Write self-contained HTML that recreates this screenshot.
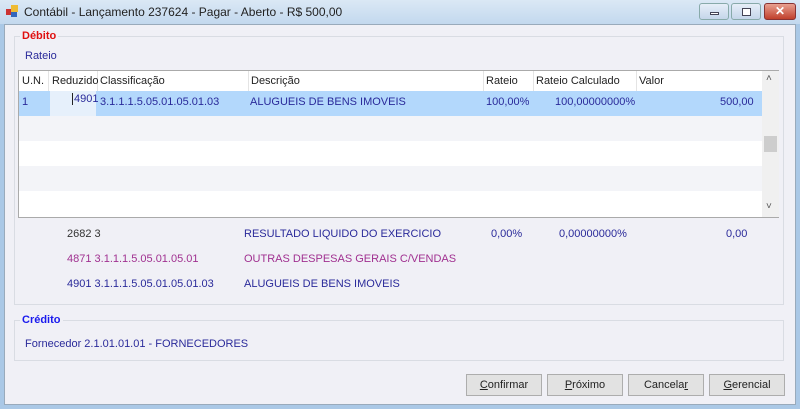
<!DOCTYPE html>
<html><head><meta charset="utf-8"><style>
*{margin:0;padding:0;box-sizing:border-box}
body{width:800px;height:409px;overflow:hidden;font-family:"Liberation Sans",sans-serif;font-size:11px;background:#aac8e6;position:relative}
.a{position:absolute;white-space:nowrap}
#title{left:0;top:0;width:800px;height:24px;background:linear-gradient(#dbe8f5,#c3d8ee)}
#body{left:4px;top:24px;width:792px;height:381px;background:#f0f0f6;border:1px solid #9ab}
.grp{border:1px solid #d9dce3;position:absolute}
.c{color:#2a2a9a}
.btn{position:absolute;top:374px;width:76px;height:22px;border:1px solid #adadad;background:#e2e2e2;text-align:center;line-height:21px;color:#222;font-size:11px}
</style></head><body>
<div class="a" id="title"></div>
<div class="a" style="left:6px;top:5px;width:12px;height:12px"><div class="a" style="left:0;top:4px;width:6px;height:6px;background:#c33"></div><div class="a" style="left:5px;top:0;width:7px;height:7px;background:#eb3"></div><div class="a" style="left:5px;top:7px;width:6px;height:5px;background:#36b"></div></div>
<div class="a" style="left:24px;top:5px;font-size:12px;color:#222">Contábil - Lançamento 237624 - Pagar - Aberto - R$ 500,00</div>
<div class="a" style="left:699px;top:3px;width:30px;height:17px;border:1px solid #8aa;border-radius:3px;background:linear-gradient(#e6eef8,#c5d6ea)"><div class="a" style="left:10px;top:8px;width:9px;height:3px;border:1px solid #445;background:#fff"></div></div>
<div class="a" style="left:731px;top:3px;width:30px;height:17px;border:1px solid #8aa;border-radius:3px;background:linear-gradient(#e6eef8,#c5d6ea)"><div class="a" style="left:10px;top:4px;width:9px;height:8px;border:1px solid #445;background:#fff"></div></div>
<div class="a" style="left:764px;top:3px;width:32px;height:17px;border:1px solid #833;border-radius:3px;background:linear-gradient(#e8a090,#c0402c);color:#fff;font-weight:bold;text-align:center;line-height:15px;font-size:12px">✕</div>
<div class="a" id="body"></div>
<div class="grp" style="left:14px;top:36px;width:770px;height:269px"></div>
<div class="a" style="left:20px;top:30px;background:#f0f0f6;padding:0 2px;color:#e01010;font-weight:bold">Débito</div>
<div class="a c" style="left:25px;top:50px">Rateio</div>
<div class="a" style="left:18px;top:70px;width:761px;height:148px;border:1px solid #aaa;background:#fff">
 <div class="a" style="left:0;top:45px;width:743px;height:25px;background:#f3f4f8"></div>
 <div class="a" style="left:0;top:95px;width:743px;height:25px;background:#f3f4f8"></div>
 <div class="a" style="left:0;top:20px;width:743px;height:25px;background:#b3d8fc"></div>
 <div class="a" style="left:31px;top:20px;width:46px;height:25px;background:#e6f0fb"></div>
 <div class="a" style="left:743px;top:0;width:17px;height:146px;background:#f0f0f0"></div>
 <div class="a" style="left:745px;top:65px;width:13px;height:16px;background:#cdcdcd"></div>
 <div class="a" style="left:747px;top:2px;color:#555;font-size:10px">˄</div>
 <div class="a" style="left:747px;top:130px;color:#555;font-size:10px">˅</div>
</div>
<div class="a" style="left:48px;top:71px;width:1px;height:20px;background:#e4e4e4"></div>
<div class="a" style="left:97px;top:71px;width:1px;height:20px;background:#e4e4e4"></div>
<div class="a" style="left:248px;top:71px;width:1px;height:20px;background:#e4e4e4"></div>
<div class="a" style="left:483px;top:71px;width:1px;height:20px;background:#e4e4e4"></div>
<div class="a" style="left:533px;top:71px;width:1px;height:20px;background:#e4e4e4"></div>
<div class="a" style="left:636px;top:71px;width:1px;height:20px;background:#e4e4e4"></div>
<div class="a" style="left:22px;top:75px;color:#222">U.N.</div>
<div class="a" style="left:52px;top:75px;color:#222">Reduzido</div>
<div class="a" style="left:100px;top:75px;color:#222">Classificação</div>
<div class="a" style="left:251px;top:75px;color:#222">Descrição</div>
<div class="a" style="left:486px;top:75px;color:#222">Rateio</div>
<div class="a" style="left:536px;top:75px;color:#222">Rateio Calculado</div>
<div class="a" style="left:639px;top:75px;color:#222">Valor</div>
<div class="a c" style="left:22px;top:96px">1</div>
<div class="a c" style="left:72px;top:93px;border-left:1px solid #222;padding-left:1px">4901</div>
<div class="a c" style="left:100px;top:96px">3.1.1.1.5.05.01.05.01.03</div>
<div class="a c" style="left:250px;top:96px">ALUGUEIS DE BENS IMOVEIS</div>
<div class="a c" style="left:486px;top:96px">100,00%</div>
<div class="a c" style="left:555px;top:96px">100,00000000%</div>
<div class="a c" style="left:720px;top:96px">500,00</div>
<div class="a" style="left:67px;top:228px;color:#333">2682 3</div>
<div class="a c" style="left:244px;top:228px">RESULTADO LIQUIDO DO EXERCICIO</div>
<div class="a c" style="left:491px;top:228px">0,00%</div>
<div class="a c" style="left:559px;top:228px">0,00000000%</div>
<div class="a c" style="left:726px;top:228px">0,00</div>
<div class="a" style="left:67px;top:253px;color:#a03090">4871 3.1.1.1.5.05.01.05.01</div>
<div class="a" style="left:244px;top:253px;color:#a03090">OUTRAS DESPESAS GERAIS C/VENDAS</div>
<div class="a c" style="left:67px;top:278px">4901 3.1.1.1.5.05.01.05.01.03</div>
<div class="a c" style="left:244px;top:278px">ALUGUEIS DE BENS IMOVEIS</div>
<div class="grp" style="left:14px;top:320px;width:770px;height:41px"></div>
<div class="a" style="left:20px;top:314px;background:#f0f0f6;padding:0 2px;color:#1a1aee;font-weight:bold">Crédito</div>
<div class="a c" style="left:25px;top:338px">Fornecedor 2.1.01.01.01 - FORNECEDORES</div>
<div class="btn" style="left:466px"><u>C</u>onfirmar</div>
<div class="btn" style="left:547px"><u>P</u>róximo</div>
<div class="btn" style="left:628px">Cancela<u>r</u></div>
<div class="btn" style="left:709px"><u>G</u>erencial</div>
</body></html>
